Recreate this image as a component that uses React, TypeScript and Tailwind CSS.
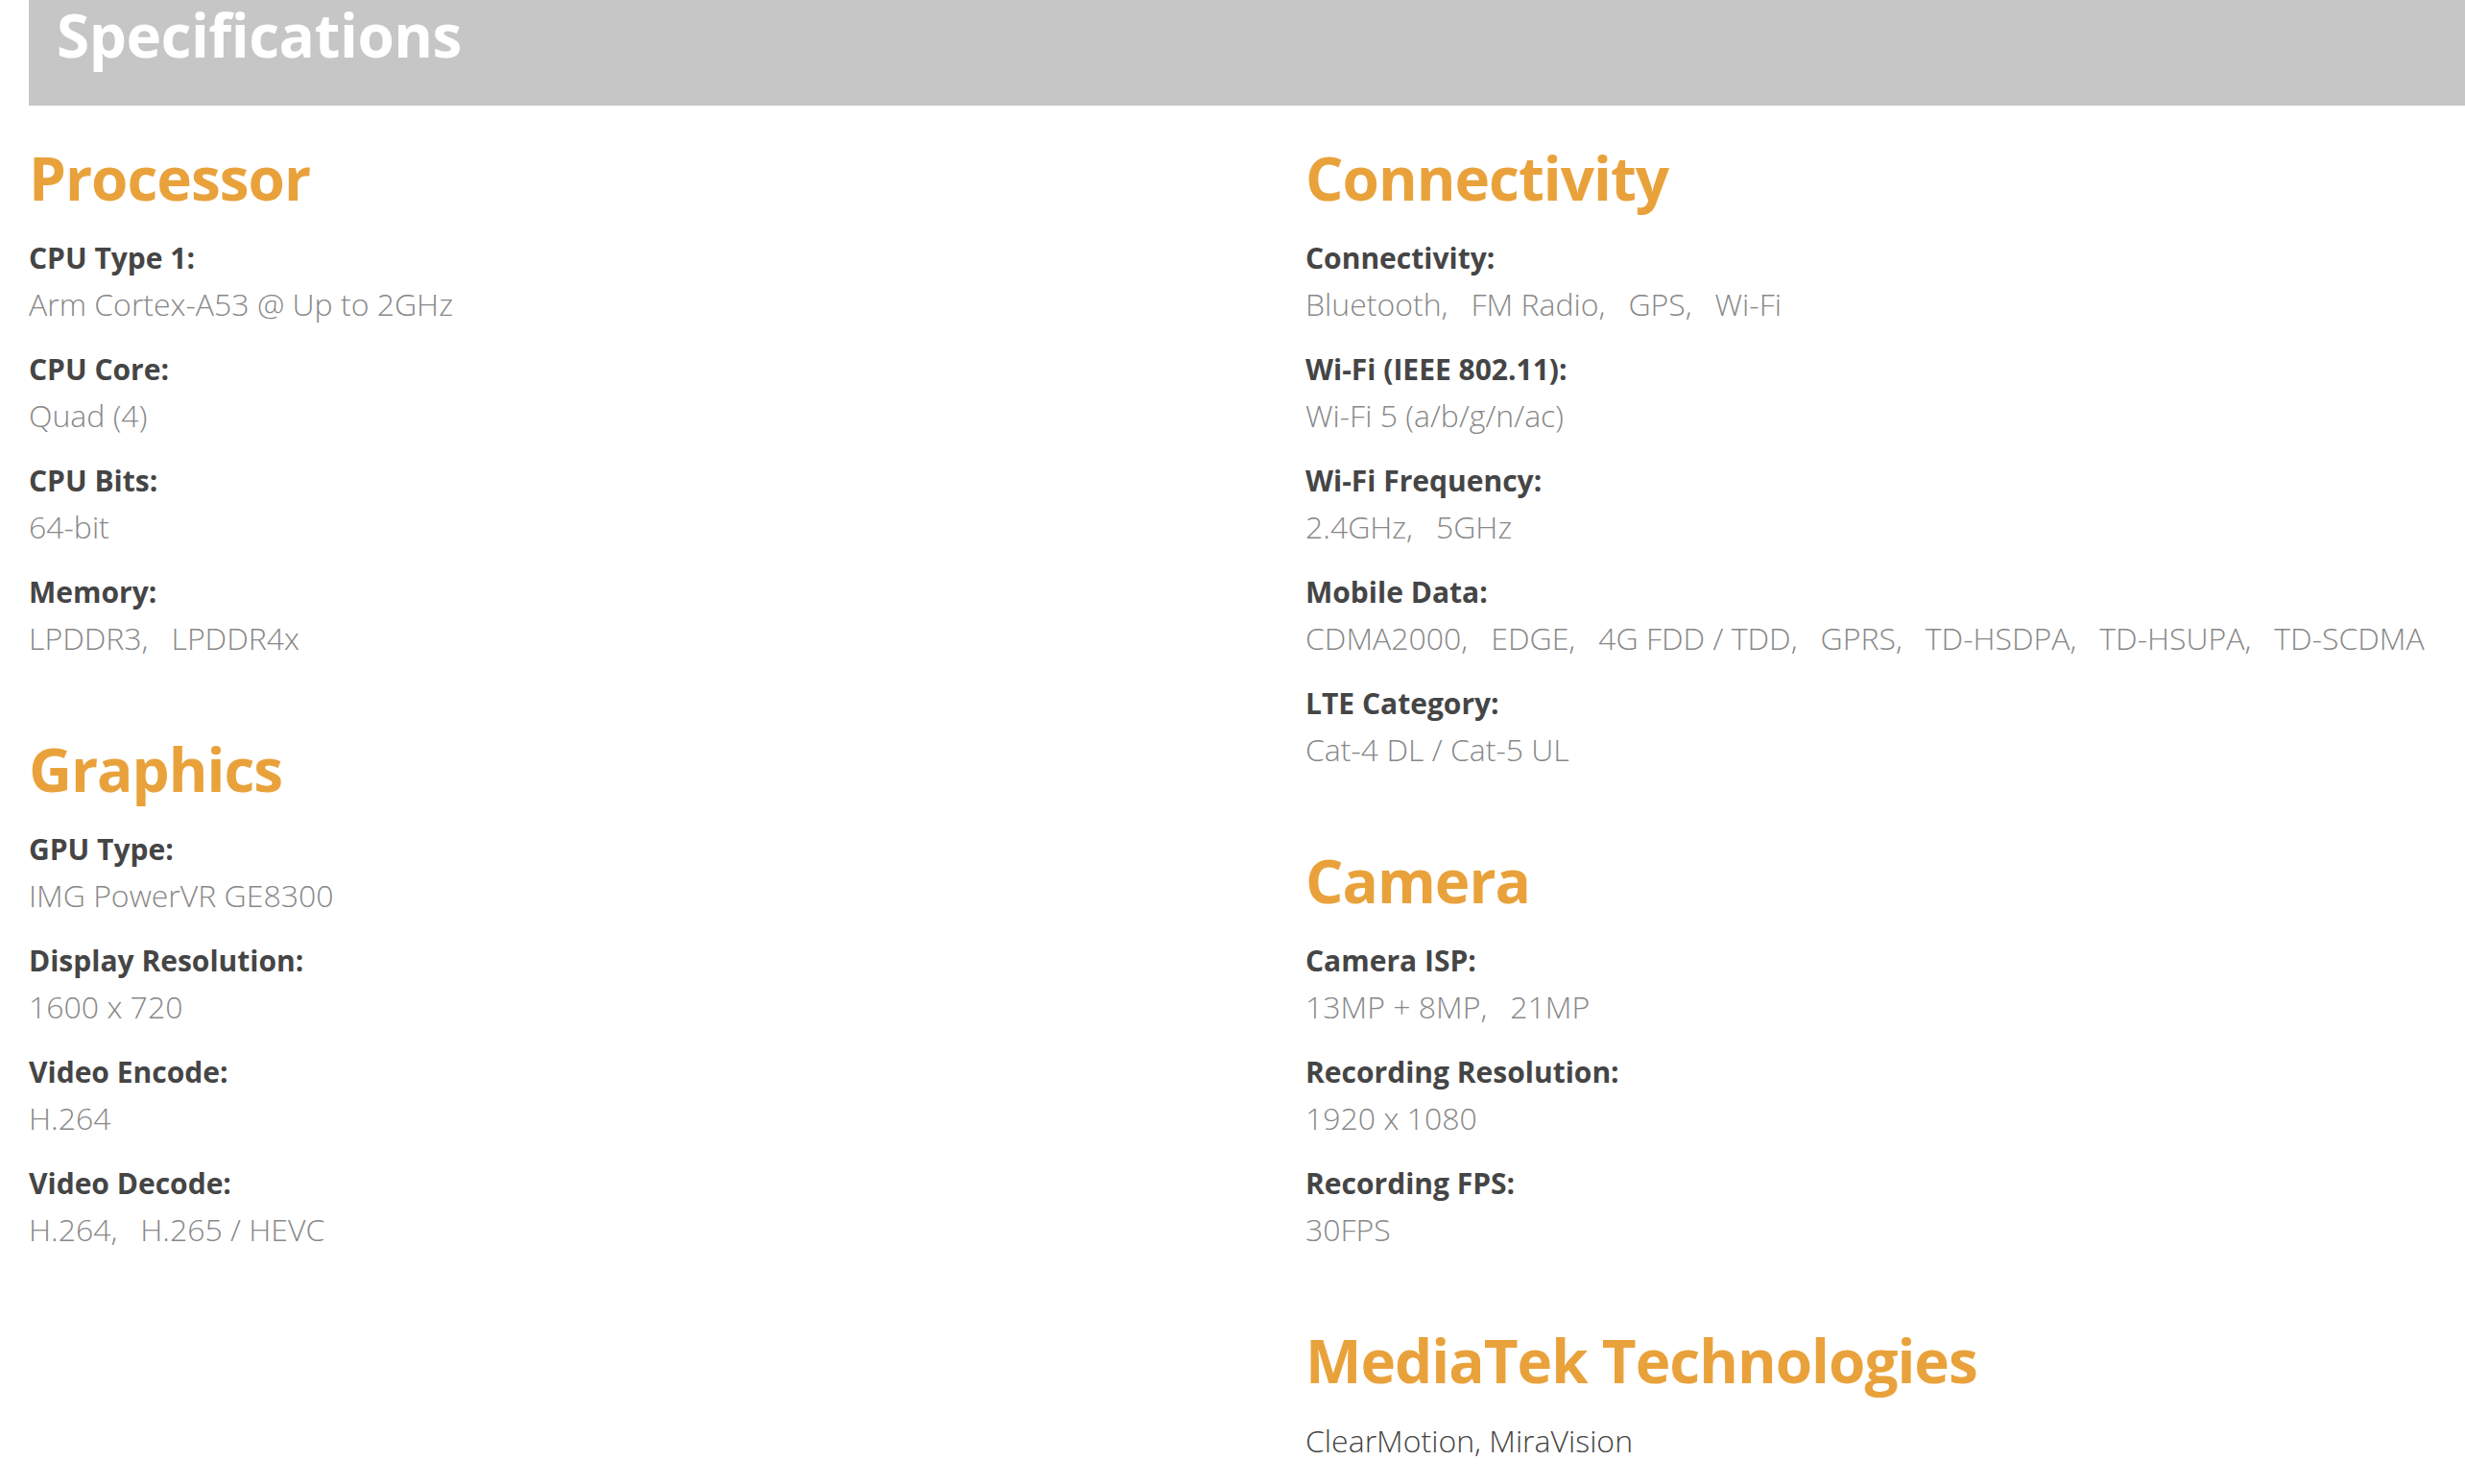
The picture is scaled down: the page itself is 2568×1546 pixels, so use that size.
const sections = {
  left: [
    {
      title: "Processor",
      items: [
        { label: "CPU Type 1:", values: ["Arm Cortex-A53 @ Up to 2GHz"] },
        { label: "CPU Core:", values: ["Quad (4)"] },
        { label: "CPU Bits:", values: ["64-bit"] },
        { label: "Memory:", values: ["LPDDR3", "LPDDR4x"] },
      ],
    },
    {
      title: "Graphics",
      items: [
        { label: "GPU Type:", values: ["IMG PowerVR GE8300"] },
        { label: "Display Resolution:", values: ["1600 x 720"] },
        { label: "Video Encode:", values: ["H.264"] },
        { label: "Video Decode:", values: ["H.264", "H.265 / HEVC"] },
      ],
    },
  ],
  right: [
    {
      title: "Connectivity",
      items: [
        { label: "Connectivity:", values: ["Bluetooth", "FM Radio", "GPS", "Wi-Fi"] },
        { label: "Wi-Fi (IEEE 802.11):", values: ["Wi-Fi 5 (a/b/g/n/ac)"] },
        { label: "Wi-Fi Frequency:", values: ["2.4GHz", "5GHz"] },
        {
          label: "Mobile Data:",
          values: ["CDMA2000", "EDGE", "4G FDD / TDD", "GPRS", "TD-HSDPA", "TD-HSUPA", "TD-SCDMA"],
        },
        { label: "LTE Category:", values: ["Cat-4 DL / Cat-5 UL"] },
      ],
    },
    {
      title: "Camera",
      items: [
        { label: "Camera ISP:", values: ["13MP + 8MP", "21MP"] },
        { label: "Recording Resolution:", values: ["1920 x 1080"] },
        { label: "Recording FPS:", values: ["30FPS"] },
      ],
    },
  ],
};

type Item = { label: string; values: string[] };
type Section = { title: string; items: Item[] };

function Heading({ children }: { children: string }) {
  return (
    <h3 className="text-[#e9a23b] text-[62px] leading-[72px] font-bold tracking-[-1px]">
      {children}
    </h3>
  );
}

function SpecSection({ section, first }: { section: Section; first?: boolean }) {
  return (
    <div className={first ? "" : "mt-[78px]"}>
      <Heading>{section.title}</Heading>
      <div className="mt-[26px] flex flex-col gap-[24px]">
        {section.items.map((item) => (
          <div key={item.label}>
            <p className="text-[#454545] text-[30px] leading-[44px] font-bold">
              {item.label}
            </p>
            <p className="mt-[4px] text-[#888888] text-[32px] leading-[44px] font-light">
              {item.values.map((v, i) => (
                <span key={v} className={i < item.values.length - 1 ? "mr-[24px]" : ""}>
                  {v}
                  {i < item.values.length - 1 ? "," : ""}
                </span>
              ))}
            </p>
          </div>
        ))}
      </div>
    </div>
  );
}

export default function App() {
  return (
    <div
      className="min-h-screen bg-white pl-[30px] overflow-hidden"
      style={{ fontFamily: '"Open Sans", "Liberation Sans", sans-serif' }}
    >
      {/* 見出しバー */}
      <div className="h-[110px] bg-[#c6c6c6] pl-[29px]">
        <h2 className="text-white text-[62px] leading-[72px] font-bold tracking-[-0.5px]">
          Specifications
        </h2>
      </div>

      <div className="mt-[39px] grid grid-cols-[1330px_1fr]">
        <div>
          {sections.left.map((s, i) => (
            <SpecSection key={s.title} section={s} first={i === 0} />
          ))}
        </div>
        <div>
          {sections.right.map((s, i) => (
            <SpecSection key={s.title} section={s} first={i === 0} />
          ))}
          <div className="mt-[78px]">
            <Heading>MediaTek Technologies</Heading>
            <p className="mt-[26px] text-[#444444] text-[32px] leading-[44px] font-light">
              ClearMotion, MiraVision
            </p>
          </div>
        </div>
      </div>
    </div>
  );
}
